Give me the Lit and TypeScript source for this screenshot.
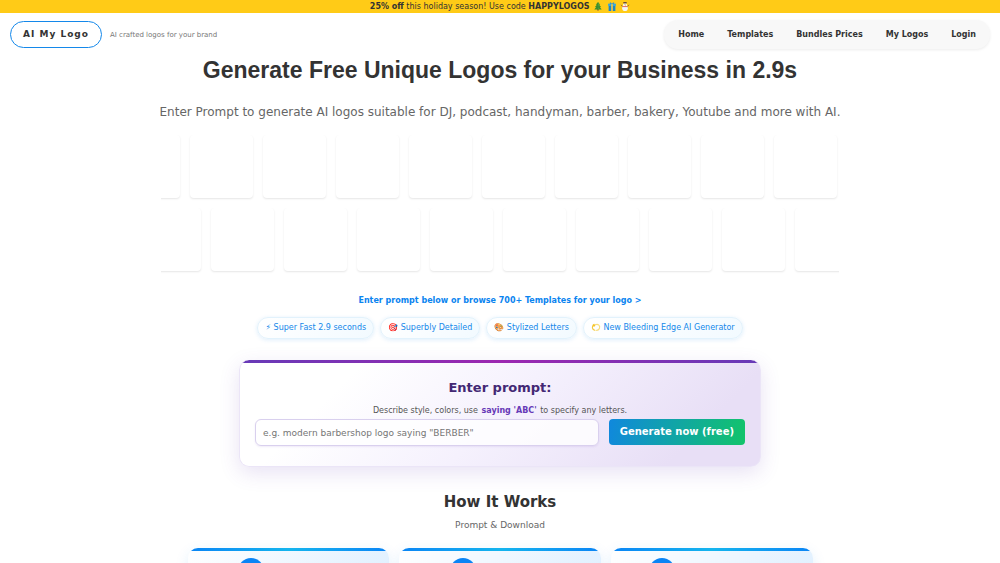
import { LitElement, html, css, svg } from "lit";
import { customElement } from "lit/decorators.js";

const NAV = ["Home", "Templates", "Bundles Prices", "My Logos", "Login"];
const TREE = svg`
  <path d="M6.500 11h3v4h-3z" fill="#8a5a2b" />
  <path d="M8 0l4 5h-2l3.500 4h-2l3 4.500h-13l3-4.500h-2L6 5H4z" fill="#3f8f2f" />
  <path d="M8 0l1.500 5L8 9l2 4.500H8z" fill="#5aa83c" />`;
const GIFT = svg`
  <path d="M1 3h14v4H1z" fill="#35a7e0" />
  <path d="M2 7h12v9H2z" fill="#1c86c4" />
  <path d="M6.500 3h3v13h-3z" fill="#f2c744" />
  <path d="M8 4C5 4 3 3 4 1.500S7 1 8 4c1-3 3-4 4-2.500S11 4 8 4z" fill="#2b92cf" />`;
const SNOWMAN = svg`
  <path d="M1 5l4 5M15 5l-4 5" stroke="#8a5a3c" stroke-width="1.500" />
  <circle cx="8" cy="11" r="5" fill="#f3f6f8" />
  <circle cx="8" cy="5.500" r="3.500" fill="#fff" />
  <path d="M5 0h6v2.500H5z" fill="#6b4a3a" />
  <path d="M4.500 7.500h7v1.500h-7z" fill="#e0483e" />
  <circle cx="6.800" cy="5" r=".6" fill="#333" />
  <circle cx="9.200" cy="5" r=".6" fill="#333" />
  <path d="M8 5.500l2 .8-2 .5z" fill="#f08a24" />`;
const SWIRL = svg`
  <path d="M4 3C0 6 1 12 6 13" fill="none" stroke="#f3c93c" stroke-width="2" stroke-linecap="round" />
  <path d="M7 3c5-2 9 2 7 7-1 2-3 3-5 3" fill="none" stroke="#f7dc7a" stroke-width="2" stroke-linecap="round" />
  <path d="M4.500 1l1 2 2 .3-1.500 1.500.4 2-1.900-1-1.900 1 .4-2L1.500 3.300l2-.3z" fill="#f6c320" />`;
const icon = (shape: unknown) =>
  html`<svg class="icon" viewBox="0 0 16 16" aria-hidden="true">${shape}</svg>`;

const FEATURES: [unknown, string][] = [
  ["⚡", "Super Fast 2.9 seconds"],
  ["🎯", "Superbly Detailed"],
  ["🎨", "Stylized Letters"],
  [icon(SWIRL), "New Bleeding Edge AI Generator"],
];
const STEPS = ["Add Prompt", "Pick Design", "Download & Use"];
const TILES = Array.from({ length: 10 });

@customElement("app-root")
export class AppRoot extends LitElement {
  static styles = css`
    :host {
      display: block;
      min-height: 100vh;
      background: #fff;
      color: #333;
      font-family: "DejaVu Sans", sans-serif;
      font-size: 8px;
      line-height: 12px;
    }
    * {
      box-sizing: border-box;
    }
    h1, h2, p {
      margin: 0;
    }
    a {
      color: inherit;
      text-decoration: none;
    }
    .icon {
      width: 10px;
      height: 9px;
      vertical-align: -2px;
    }
    .banner {
      background: #ffcb17;
      text-align: center;
      line-height: 13px;
    }
    .banner .icon {
      margin-left: 1px;
    }
    .header {
      display: flex;
      align-items: center;
      justify-content: space-between;
      height: 43px;
      padding: 0 10px;
    }
    .brand {
      display: flex;
      align-items: center;
      gap: 8px;
    }
    .logo {
      border: 1px solid #1488ea;
      border-radius: 14px;
      padding: 6px 12px;
      font-size: 9px;
      line-height: 13px;
      font-weight: bold;
      letter-spacing: 1px;
    }
    .tagline {
      font-size: 7px;
      color: #777;
    }
    .nav {
      display: flex;
      gap: 23px;
      padding: 8px 14px;
      border-radius: 14px;
      background: #f8f8f8;
      box-shadow: 0 1px 3px rgba(0, 0, 0, 0.08);
      line-height: 13px;
      font-weight: bold;
    }
    .hero {
      display: flex;
      flex-direction: column;
      align-items: center;
    }
    h1 {
      font: bold 23px/28px "Liberation Sans", Arial, sans-serif;
    }
    .lead {
      margin-top: 20px;
      font-size: 12px;
      line-height: 16px;
      color: #666;
    }
    .gallery {
      width: 100%;
      max-width: 678px;
      margin-top: 15px;
    }
    .strip {
      display: flex;
      gap: 10px;
      overflow: hidden;
      padding-bottom: 10px;
    }
    .tile {
      flex: none;
      width: 63px;
      height: 63px;
      border-radius: 4px;
      background: #fff;
      box-shadow: 0 1px 2px rgba(0, 0, 0, 0.1);
    }
    .strip .tile:first-child {
      margin-left: -44px;
    }
    .strip.shifted .tile:first-child {
      margin-left: -23px;
    }
    .browse {
      margin-top: 14px;
      font-weight: bold;
      color: #0a84f0;
    }
    .features {
      display: flex;
      gap: 6px;
      margin-top: 10px;
    }
    .feature {
      padding: 4px 7px;
      border: 1px solid #e2f2fc;
      border-radius: 11px;
      background: linear-gradient(135deg, #fff, #f2faff);
      box-shadow: 0 1px 4px rgba(20, 136, 234, 0.14);
      color: #1488ea;
    }
    .prompt {
      display: flex;
      flex-direction: column;
      align-items: center;
      width: 522px;
      max-width: 100%;
      margin-top: 21px;
      padding: 0 15px 20px;
      border: 1px solid #ebe5f7;
      border-top: 0;
      border-radius: 10px;
      background:
        linear-gradient(90deg, #673ab7, #9c27b0, #673ab7) top / 100% 3px no-repeat,
        linear-gradient(135deg, #fff 20%, #f5f1fd 50%, #e8dff6 85%);
      box-shadow: 0 6px 20px rgba(103, 58, 183, 0.15);
    }
    .prompt-title {
      margin-top: 20px;
      font-size: 13px;
      line-height: 16px;
      font-weight: bold;
      color: #432874;
    }
    .hint {
      margin-top: 9px;
      color: #555;
    }
    .hint b {
      color: #673ab7;
      padding: 0 1px;
    }
    .row {
      display: flex;
      gap: 10px;
      width: 100%;
      margin-top: 2px;
    }
    .field {
      flex: 1;
      min-width: 0;
      height: 27px;
      padding: 0 7px;
      border: 1px solid #d9d0ee;
      border-radius: 6px;
      background: rgba(255, 255, 255, 0.8);
      box-shadow: 0 1px 2px rgba(103, 58, 183, 0.1);
      font: 9px/14px "DejaVu Sans", sans-serif;
    }
    .field::placeholder {
      color: #757575;
    }
    .go {
      height: 26px;
      padding: 0 11px;
      border: 0;
      border-radius: 4px;
      background: linear-gradient(100deg, #1088dd, #12c46a);
      color: #fff;
      font: bold 10px/14px "DejaVu Sans", sans-serif;
    }
    .how {
      margin-top: 25px;
      text-align: center;
    }
    h2 {
      font-size: 15px;
      line-height: 20px;
    }
    .sub {
      margin-top: 7px;
      font-size: 9px;
      color: #666;
    }
    .steps {
      display: grid;
      grid-template-columns: repeat(3, 1fr);
      gap: 10px;
      width: 625px;
      max-width: 100%;
      margin: 17px auto 0;
    }
    .step {
      display: flex;
      justify-content: center;
      gap: 8px;
      min-height: 100px;
      padding-top: 10px;
      border-radius: 10px;
      background:
        linear-gradient(90deg, #0a84f5, #14b4ee, #0a84f5) top / 100% 3px no-repeat,
        linear-gradient(135deg, #fff, #e4f2ff 65%, #d9edff);
      box-shadow: 0 4px 14px rgba(20, 136, 234, 0.12);
      font-size: 10px;
    }
    .step b {
      padding-top: 7px;
    }
    .num {
      width: 26px;
      height: 26px;
      padding-top: 7px;
      border-radius: 50%;
      background: #0a84f5;
      color: #fff;
    }
  `;

  render() {
    return html`
      <div class="banner"><b>25% off</b> this holiday season! Use code <b>HAPPYLOGOS</b> ${icon(TREE)} ${icon(GIFT)} ${icon(SNOWMAN)}</div>
      <header class="header">
        <div class="brand">
          <a class="logo" href="#">AI My Logo</a>
          <span class="tagline">AI crafted logos for your brand</span>
        </div>
        <nav class="nav">${NAV.map((n) => html`<a href="#">${n}</a>`)}</nav>
      </header>
      <main>
        <section class="hero">
          <h1>Generate Free Unique Logos for your Business in 2.9s</h1>
          <p class="lead">Enter Prompt to generate AI logos suitable for DJ, podcast, handyman, barber, bakery, Youtube and more with AI.</p>
          <div class="gallery">
            <div class="strip">${TILES.map(() => html`<div class="tile"></div>`)}</div>
            <div class="strip shifted">${TILES.map(() => html`<div class="tile"></div>`)}</div>
          </div>
          <a class="browse" href="#">Enter prompt below or browse 700+ Templates for your logo &gt;</a>
          <div class="features">
            ${FEATURES.map(([mark, label]) => html`<span class="feature">${mark} ${label}</span>`)}
          </div>
          <form class="prompt" @submit=${(e: Event) => e.preventDefault()}>
            <label class="prompt-title" for="prompt">Enter prompt:</label>
            <p class="hint">Describe style, colors, use <b>saying 'ABC'</b> to specify any letters.</p>
            <div class="row">
              <input class="field" id="prompt" type="text" placeholder='e.g. modern barbershop logo saying "BERBER"' />
              <button class="go" type="submit">Generate now (free)</button>
            </div>
          </form>
        </section>
        <section class="how">
          <h2>How It Works</h2>
          <p class="sub">Prompt &amp; Download</p>
          <div class="steps">
            ${STEPS.map((s, i) => html`<div class="step"><span class="num">${i + 1}</span><b>${s}</b></div>`)}
          </div>
        </section>
      </main>
    `;
  }
}
